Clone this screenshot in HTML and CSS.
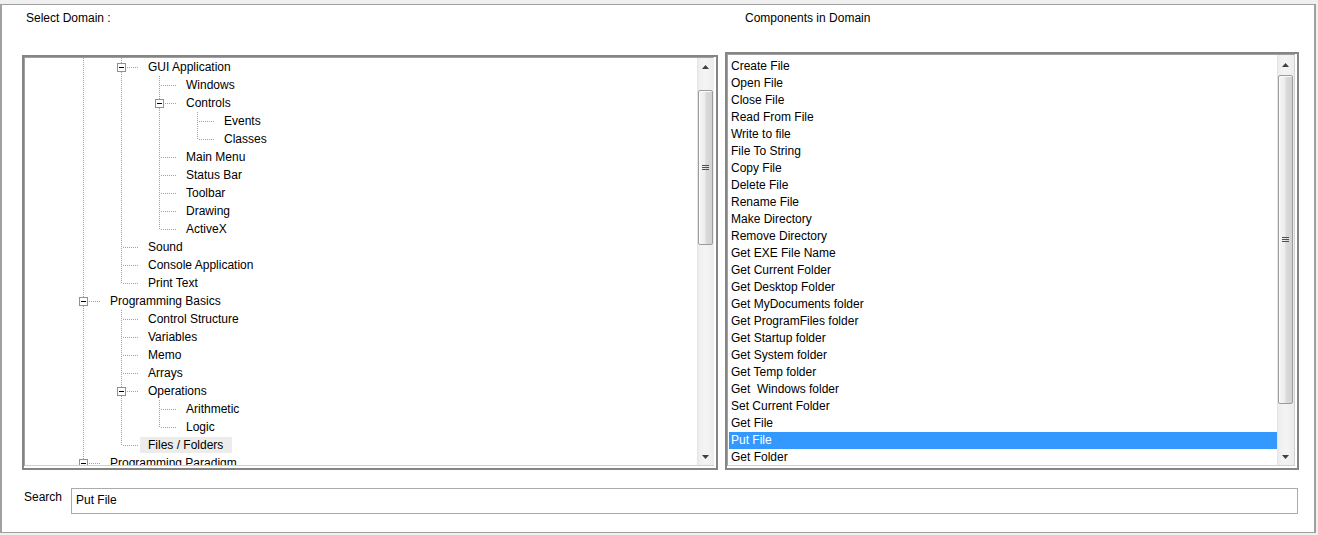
FILE: index.html
```html
<!DOCTYPE html>
<html>
<head>
<meta charset="utf-8">
<title>Domain</title>
<link rel="stylesheet" href="styles.css">
</head>
<body>
<div class="window">
  <div class="cols header">
    <div class="hl hl-left">Select Domain :</div>
    <div class="hl hl-right">Components in Domain</div>
  </div>
  <div class="cols panels">
    <div class="panel tree-panel">
      <div class="inner">
        <div class="tree">
          <div class="row"><i class="c v"></i><i class="c bx"></i><span class="lbl">GUI Application</span></div>
          <div class="row"><i class="c v"></i><i class="c v"></i><i class="c t"></i><span class="lbl">Windows</span></div>
          <div class="row"><i class="c v"></i><i class="c v"></i><i class="c bx"></i><span class="lbl">Controls</span></div>
          <div class="row"><i class="c v"></i><i class="c v"></i><i class="c v"></i><i class="c t"></i><span class="lbl">Events</span></div>
          <div class="row"><i class="c v"></i><i class="c v"></i><i class="c v"></i><i class="c l"></i><span class="lbl">Classes</span></div>
          <div class="row"><i class="c v"></i><i class="c v"></i><i class="c t"></i><span class="lbl">Main Menu</span></div>
          <div class="row"><i class="c v"></i><i class="c v"></i><i class="c t"></i><span class="lbl">Status Bar</span></div>
          <div class="row"><i class="c v"></i><i class="c v"></i><i class="c t"></i><span class="lbl">Toolbar</span></div>
          <div class="row"><i class="c v"></i><i class="c v"></i><i class="c t"></i><span class="lbl">Drawing</span></div>
          <div class="row"><i class="c v"></i><i class="c v"></i><i class="c l"></i><span class="lbl">ActiveX</span></div>
          <div class="row"><i class="c v"></i><i class="c t"></i><span class="lbl">Sound</span></div>
          <div class="row"><i class="c v"></i><i class="c t"></i><span class="lbl">Console Application</span></div>
          <div class="row"><i class="c v"></i><i class="c l"></i><span class="lbl">Print Text</span></div>
          <div class="row"><i class="c bx"></i><span class="lbl">Programming Basics</span></div>
          <div class="row"><i class="c v"></i><i class="c t"></i><span class="lbl">Control Structure</span></div>
          <div class="row"><i class="c v"></i><i class="c t"></i><span class="lbl">Variables</span></div>
          <div class="row"><i class="c v"></i><i class="c t"></i><span class="lbl">Memo</span></div>
          <div class="row"><i class="c v"></i><i class="c t"></i><span class="lbl">Arrays</span></div>
          <div class="row"><i class="c v"></i><i class="c bx"></i><span class="lbl">Operations</span></div>
          <div class="row"><i class="c v"></i><i class="c v"></i><i class="c t"></i><span class="lbl">Arithmetic</span></div>
          <div class="row"><i class="c v"></i><i class="c v"></i><i class="c l"></i><span class="lbl">Logic</span></div>
          <div class="row"><i class="c v"></i><i class="c l"></i><span class="lbl hot">Files / Folders</span></div>
          <div class="row"><i class="c bx"></i><span class="lbl">Programming Paradigm</span></div>
        </div>
        <div class="sb sb-tree">
          <div class="sb-btn"><svg width="7" height="4" viewBox="0 0 7 4"><path d="M0 4H7L3.5 0Z" fill="#404040"/></svg></div>
          <div class="sb-track">
            <div class="sb-gap gap-tree"></div>
            <div class="thumb thumb-tree"><span class="grip"></span></div>
          </div>
          <div class="sb-btn"><svg width="7" height="4" viewBox="0 0 7 4"><path d="M0 0H7L3.5 4Z" fill="#404040"/></svg></div>
        </div>
      </div>
    </div>
    <div class="panel list-panel">
      <div class="inner">
        <div class="list">
          <div class="item">Create File</div>
          <div class="item">Open File</div>
          <div class="item">Close File</div>
          <div class="item">Read From File</div>
          <div class="item">Write to file</div>
          <div class="item">File To String</div>
          <div class="item">Copy File</div>
          <div class="item">Delete File</div>
          <div class="item">Rename File</div>
          <div class="item">Make Directory</div>
          <div class="item">Remove Directory</div>
          <div class="item">Get EXE File Name</div>
          <div class="item">Get Current Folder</div>
          <div class="item">Get Desktop Folder</div>
          <div class="item">Get MyDocuments folder</div>
          <div class="item">Get ProgramFiles folder</div>
          <div class="item">Get Startup folder</div>
          <div class="item">Get System folder</div>
          <div class="item">Get Temp folder</div>
          <div class="item">Get&nbsp; Windows folder</div>
          <div class="item">Set Current Folder</div>
          <div class="item">Get File</div>
          <div class="item selected">Put File</div>
          <div class="item">Get Folder</div>
        </div>
        <div class="sb sb-list">
          <div class="sb-btn"><svg width="7" height="4" viewBox="0 0 7 4"><path d="M0 4H7L3.5 0Z" fill="#404040"/></svg></div>
          <div class="sb-track">
            <div class="sb-gap gap-list"></div>
            <div class="thumb thumb-list"><span class="grip"></span></div>
          </div>
          <div class="sb-btn"><svg width="7" height="4" viewBox="0 0 7 4"><path d="M0 0H7L3.5 4Z" fill="#404040"/></svg></div>
        </div>
      </div>
    </div>
  </div>
  <div class="search-row">
    <div class="search-label">Search</div>
    <div class="search-box">Put File</div>
  </div>
</div>
</body>
</html>
```

FILE: styles.css
```css
html, body {
  margin: 0;
  padding: 0;
}
body {
  background: #f0f0f0;
  font-family: "Liberation Sans", Arial, sans-serif;
  font-size: 12px;
  color: #000;
  width: 1318px;
  height: 535px;
  overflow: hidden;
}
.window {
  margin-top: 4px;
  width: 1312px;
  height: 527px;
  background: #fff;
  border-top: 1px solid #a0a0a0;
  border-left: 2px solid #a0a0a0;
  border-right: 2px solid #a0a0a0;
  border-bottom: 1px solid #a0a0a0;
}
.cols {
  display: grid;
  grid-template-columns: 696px 574px;
  column-gap: 7px;
  padding-left: 20px;
}
.header {
  height: 47px;
}
.hl {
  padding-top: 6px;
  line-height: 14px;
  white-space: nowrap;
}
.hl-left { margin-left: 4px; }
.hl-right { margin-left: 20px; }

.panels {
  height: 418px;
  align-items: end;
}
.panel {
  border: 2px solid #858585;
  padding: 0 2px 2px 0;
  background: #fff;
  box-sizing: border-box;
}
.tree-panel { height: 415px; }
.list-panel { height: 418px; }
.inner {
  height: 100%;
  box-sizing: border-box;
  border: 1px solid;
  border-color: #a0a0a0 #d0d0d0 #d0d0d0 #a0a0a0;
  display: flex;
}

/* tree */
.tree {
  flex: 1;
  overflow: hidden;
  padding-left: 38px;
}
.row {
  display: flex;
  height: 18px;
  white-space: nowrap;
}
.c {
  display: block;
  flex: none;
  width: 38px;
  height: 18px;
  position: relative;
  background-repeat: no-repeat;
}
.v {
  background-image: repeating-linear-gradient(to bottom, #a0a0a0 0 1px, transparent 1px 2px);
  background-position: 20px 0;
  background-size: 1px 18px;
}
.t, .l, .bx {
  background-image:
    repeating-linear-gradient(to right, #a0a0a0 0 1px, transparent 1px 2px),
    repeating-linear-gradient(to bottom, #a0a0a0 0 1px, transparent 1px 2px);
}
.t {
  background-position: 22px 9px, 20px 0;
  background-size: 16px 1px, 1px 18px;
}
.l {
  background-position: 22px 9px, 20px 0;
  background-size: 16px 1px, 1px 10px;
}
.bx {
  background-position: 26px 9px, 20px 0;
  background-size: 12px 1px, 1px 18px;
}
.bx::before {
  content: "";
  position: absolute;
  left: 16px;
  top: 5px;
  width: 7px;
  height: 7px;
  border: 1px solid #919191;
  background: linear-gradient(#000, #000) center / 5px 1px no-repeat, #fff;
}
.lbl {
  display: block;
  margin: 1px 0 1px 1px;
  padding: 0 9px 0 8px;
  height: 16px;
  line-height: 16px;
}
.lbl.hot {
  background: #ececec;
}

/* scrollbars */
.sb {
  flex: none;
  width: 17px;
  display: flex;
  flex-direction: column;
  background: linear-gradient(to right, #e2e2e2, #efefef 2px, #f4f4f4 50%, #ececec);
}
.sb-tree { margin-right: -1px; }
.sb-btn {
  height: 17px;
  flex: none;
  display: flex;
  align-items: center;
  justify-content: center;
}
.sb-list .sb-btn:first-child { height: 19px; }
.sb-btn svg { display: block; }
.sb-track {
  flex: 1;
  display: flex;
  flex-direction: column;
}
.sb-gap { flex: none; }
.gap-tree { height: 15px; }
.gap-list { height: 1px; }
.thumb {
  flex: none;
  margin: 0 1px;
  box-sizing: border-box;
  border: 1px solid #9c9c9c;
  border-radius: 2px;
  background: linear-gradient(to right, #f6f6f6, #ececec 45%, #dadada 55%, #d2d2d2);
  box-shadow: inset 1px 1px 0 #fbfbfb;
  display: flex;
  align-items: center;
  justify-content: center;
}
.thumb-tree { height: 155px; }
.thumb-list { height: 329px; }
.grip {
  display: block;
  width: 7px;
  height: 5px;
  background: repeating-linear-gradient(to bottom, #505050 0 1px, transparent 1px 2px);
}

/* list */
.list {
  flex: 1;
  overflow: hidden;
  padding-top: 3px;
}
.item {
  height: 17px;
  line-height: 17px;
  margin-left: 1px;
  padding-left: 2px;
  white-space: nowrap;
}
.item.selected {
  background: #3399ff;
  color: #fff;
}

/* search */
.search-row {
  display: flex;
  align-items: flex-start;
  margin-top: 18px;
  padding-left: 22px;
}
.search-label {
  flex: none;
  width: 47px;
  padding-top: 2px;
  line-height: 14px;
}
.search-box {
  flex: none;
  width: 1227px;
  height: 26px;
  box-sizing: border-box;
  border: 1px solid #ababab;
  padding-left: 4px;
  line-height: 23px;
  white-space: nowrap;
}
```
